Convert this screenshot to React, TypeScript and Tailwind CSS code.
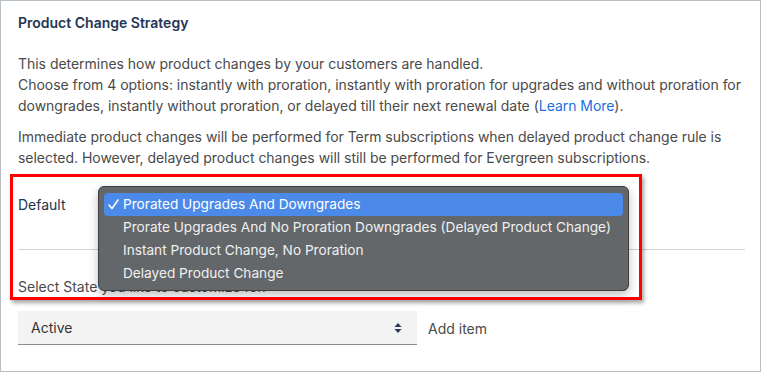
import React from 'react';

const options = [
  'Prorated Upgrades And Downgrades',
  'Prorate Upgrades And No Proration Downgrades (Delayed Product Change)',
  'Instant Product Change, No Proration',
  'Delayed Product Change',
];

function UpDownIcon() {
  return (
    <svg width="8" height="12" viewBox="0 0 8 12" className="text-[#2b3a55]">
      <path d="M4 1 L7.5 5 H0.5 Z" fill="currentColor" />
      <path d="M4 11 L7.5 7 H0.5 Z" fill="currentColor" />
    </svg>
  );
}

function Check() {
  return (
    <svg width="11" height="11" viewBox="0 0 11 11" className="absolute left-[4px] top-[6px]">
      <path d="M1 6 L4 9.5 L10 1" fill="none" stroke="white" strokeWidth="1.6" strokeLinecap="round" strokeLinejoin="round" />
    </svg>
  );
}

export default function App() {
  const selected = 0;

  return (
    <div className="relative w-[761px] h-[372px] bg-white border border-[#b9c0c5] font-['Inter',sans-serif] overflow-hidden">
      <div className="pl-[17px] pr-[8px] pt-[12px]">
        {/* Header */}
        <h2 className="text-[14px] leading-[20px] font-semibold text-[#233554]">Product Change Strategy</h2>

        {/* Description */}
        <p className="mt-[20px] text-[14px] leading-[21px] text-[#4a4a4a] tracking-[-0.03px]">
          This determines how product changes by your customers are handled.
          <br />
          Choose from 4 options: instantly with proration, instantly with proration for upgrades and without proration for
          <br />
          downgrades, instantly without proration, or delayed till their next renewal date (
          <a className="text-[#1b6fe0]">Learn More</a>).
        </p>
        <p className="mt-[10px] text-[14px] leading-[21px] text-[#4a4a4a] tracking-[-0.03px]">
          Immediate product changes will be performed for Term subscriptions when delayed product change rule is
          <br />
          selected. However, delayed product changes will still be performed for Evergreen subscriptions.
        </p>

        {/* Default rule */}
        <div className="mt-[19px] flex items-center h-[34px]">
          <span className="w-[80px] text-[14px] text-[#233554]">Default</span>
        </div>
        <div className="mt-[28px] w-[727px] border-t border-[#d2d2d2]" />

        <div className="mt-[27px] text-[14px] leading-[20px] text-[#4a4a4a]">Select State you like to customize for.</div>

        {/* State picker */}
        <div className="mt-[14px] flex items-center">
          <div className="w-[399px] h-[34px] bg-[#f3f3f3] border-b border-[#8c8c8c] flex items-center justify-between pl-[13px] pr-[15px]">
            <span className="text-[14px] text-[#333]">Active</span>
            <UpDownIcon />
          </div>
          <span className="ml-[11px] text-[14px] text-[#4a4a4a]">Add item</span>
        </div>
      </div>

      {/* Open native-style dropdown */}
      <div className="absolute left-[97px] top-[185px] w-[531px] h-[105px] rounded-[6px] bg-[#63676a] border border-[#3c3e40] shadow-[0_4px_10px_rgba(0,0,0,0.25)] px-[5px] pt-[6px]">
        {options.map((opt, i) => (
          <div
            key={opt}
            className={
              'relative h-[23px] flex items-center pl-[19px] text-[13.65px] whitespace-nowrap rounded-[4px] ' +
              (i === selected ? 'bg-[#4b8ae8] text-white' : 'text-[#f0f0f0]')
            }
          >
            {i === selected && <Check />}
            {opt}
          </div>
        ))}
      </div>

      {/* Annotation highlight */}
      <div className="absolute left-[9px] top-[173px] w-[632px] h-[126px] border-[3px] border-[#ff0000] shadow-[2px_3px_4px_rgba(0,0,0,0.35)] pointer-events-none" />
    </div>
  );
}
